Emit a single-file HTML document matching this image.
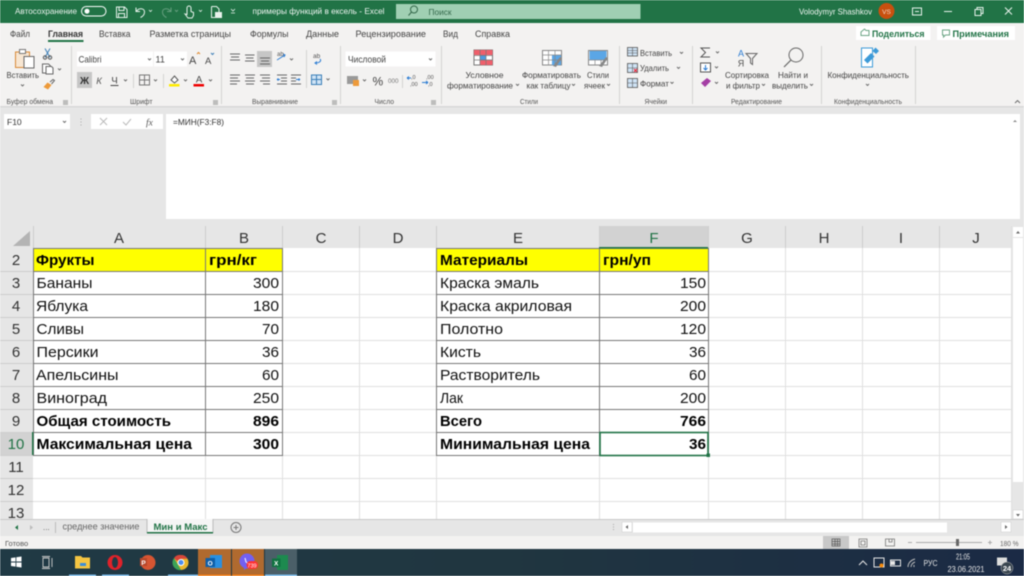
<!DOCTYPE html>
<html><head><meta charset="utf-8"><style>
html,body{margin:0;padding:0;width:1024px;height:576px;overflow:hidden;background:#fff}
svg{display:block;filter:blur(.45px)}
text{font-family:"Liberation Sans","Noto Sans CJK SC",sans-serif}
.r text{font-size:8.5px;fill:#444}
.g text{font-size:7.5px;fill:#555}
.c{font-size:15px;fill:#111}
.b{font-weight:bold;fill:#000}
.h{font-size:15px;fill:#333;text-anchor:middle}
.w{fill:#fff}
.ch{fill:none;stroke:#666;stroke-width:.9}
</style></head><body>
<svg width="1024" height="576" viewBox="0 0 1024 576" xmlns="http://www.w3.org/2000/svg">
<!-- title bar -->
<rect width="1024" height="23" fill="#217346"/>
<text x="15" y="14" class="w" font-size="8.5" textLength="62" lengthAdjust="spacingAndGlyphs" opacity=".9">Автосохранение</text>
<rect x="81.500" y="6.500" width="24.500" height="9.500" rx="4.700" fill="none" stroke="#fff"/>
<circle cx="87" cy="11.200" r="2.500" fill="#fff"/>
<g fill="none" stroke="#e8f2ec" stroke-width="1">
<path d="M116.500 7h8l2.500 2.500v8h-10.500zM119 7v3.500h5V7M118.500 17.500v-4h6v4"/>
<path d="M136 7.500v4h4M136.500 11.500c2-4 8-3.500 8 .5 0 2.500-2 4.500-4 5.500"/>
<path d="M149 10l1.500 1.500L152 10M199 10l1.500 1.500L202 10" stroke-width=".8"/>
<path d="M171 7.500v4h-4M170.500 11.500c-2-4-8-3.500-8 .5 0 2.500 2 4.500 4 5.500M175 10l1.500 1.500L178 10" opacity=".35"/>
<path d="M187 8a2 2 0 0 1 4 0v3.500l2.500 1v3l-1.500 2.500h-4l-3-4 2 .5z"/>
<path d="M211.500 6.500h5l2.500 2.500v3M211.500 6.500v11h4"/>
<path d="M231 9l2 2 2-2M231 13h4" stroke-width=".8"/>
</g>
<rect x="215" y="12" width="7" height="6" fill="#e8f2ec"/>
<text x="252.500" y="14" class="w" font-size="8.500" textLength="132" lengthAdjust="spacingAndGlyphs" opacity=".92">примеры функций в ексель  -  Excel</text>
<rect x="396" y="4" width="244.500" height="15" fill="#a0cfb3"/>
<circle cx="414" cy="9.500" r="3.500" fill="none" stroke="#35694c"/><path d="M411.500 12l-3 3.500" stroke="#35694c"/>
<text x="428.500" y="15" font-size="8.500" fill="#35694c" textLength="23" lengthAdjust="spacingAndGlyphs">Поиск</text>
<text x="799" y="14.500" class="w" font-size="8.500" textLength="73" lengthAdjust="spacingAndGlyphs" opacity=".92">Volodymyr Shashkov</text>
<circle cx="886.500" cy="11" r="8" fill="#c8500f"/>
<text x="886.500" y="14" font-size="6.500" fill="#f4d9c8" text-anchor="middle">VS</text>
<g fill="none" stroke="#e8f2ec">
<rect x="912.500" y="8" width="9" height="7"/><path d="M915 11.500h4"/>
<path d="M944 11.500h8"/>
<path d="M975 9.500h6v6h-6zM977 9.500V7.500h6v6h-2"/>
<path d="M1005 7.500l7 7M1012 7.500l-7 7"/>
</g>
<!-- ribbon -->
<rect y="23" width="1024" height="83" fill="#f3f2f1"/>
<g class="r">
<text x="10" y="37" style="font-size:9px" textLength="20" lengthAdjust="spacingAndGlyphs">Файл</text>
<text x="48" y="37" style="font-size:9px;font-weight:bold;fill:#333" textLength="35" lengthAdjust="spacingAndGlyphs">Главная</text>
<text x="99" y="37" style="font-size:9px" textLength="31.500" lengthAdjust="spacingAndGlyphs">Вставка</text>
<text x="149.500" y="37" style="font-size:9px" textLength="81.500" lengthAdjust="spacingAndGlyphs">Разметка страницы</text>
<text x="250" y="37" style="font-size:9px" textLength="38.500" lengthAdjust="spacingAndGlyphs">Формулы</text>
<text x="306" y="37" style="font-size:9px" textLength="33" lengthAdjust="spacingAndGlyphs">Данные</text>
<text x="355.500" y="37" style="font-size:9px" textLength="70.500" lengthAdjust="spacingAndGlyphs">Рецензирование</text>
<text x="443" y="37" style="font-size:9px" textLength="15" lengthAdjust="spacingAndGlyphs">Вид</text>
<text x="475" y="37" style="font-size:9px" textLength="35" lengthAdjust="spacingAndGlyphs">Справка</text>
</g>
<rect x="48" y="40" width="35.500" height="2" fill="#217346"/>
<rect x="856" y="26" width="74.500" height="14" fill="#fff"/>
<rect x="937" y="26" width="78" height="14" fill="#fff"/>
<path d="M861 35.500h8v-5h-3l-1.500-1.500-3.500 3z" fill="none" stroke="#6ba585"/>
<path d="M942.500 30h7v5h-4l-2 2v-2h-1z" fill="none" stroke="#6ba585"/>
<text x="872" y="37" font-size="9" font-weight="bold" fill="#217346" textLength="52.500" lengthAdjust="spacingAndGlyphs">Поделиться</text>
<text x="952.500" y="37" font-size="9" font-weight="bold" fill="#217346" textLength="56.500" lengthAdjust="spacingAndGlyphs">Примечания</text>
<!-- separators -->
<g stroke="#d4d3d2"><path d="M71.500 46v58M221.500 46v58M340.500 46v58M441.500 46v58M619.500 46v58M692.500 46v58M821.500 46v58M915.500 46v58M306.500 50v38"/></g>
<!-- boxes first so text sits above -->
<rect x="77" y="51.500" width="76" height="15" fill="#fff"/><rect x="154" y="51.500" width="33" height="15" fill="#fff"/>
<rect x="345.500" y="51.500" width="90" height="15" fill="#fff"/>
<!-- clipboard -->
<path d="M15.500 52h14v15.500h-14z" fill="#f7e6d2" stroke="#d98a38"/>
<rect x="19.500" y="49.500" width="6" height="4" fill="#fff" stroke="#777"/>
<rect x="24" y="56.500" width="10" height="11.500" fill="#fff" stroke="#666"/>
<g class="r">
<text x="6.500" y="78" textLength="32.500" lengthAdjust="spacingAndGlyphs">Вставить</text>
<text x="78.500" y="62.500" style="font-size:9px" textLength="23" lengthAdjust="spacingAndGlyphs">Calibri</text>
<text x="155.500" y="62.500" style="font-size:9px">11</text>
<text x="348" y="62.500" style="font-size:9px" textLength="38" lengthAdjust="spacingAndGlyphs">Числовой</text>
<text x="465.500" y="78" textLength="38" lengthAdjust="spacingAndGlyphs">Условное</text>
<text x="447" y="88.500" textLength="66" lengthAdjust="spacingAndGlyphs">форматирование</text>
<text x="522" y="78" textLength="59" lengthAdjust="spacingAndGlyphs">Форматировать</text>
<text x="526.500" y="88.500" textLength="44" lengthAdjust="spacingAndGlyphs">как таблицу</text>
<text x="587" y="78" textLength="22" lengthAdjust="spacingAndGlyphs">Стили</text>
<text x="584" y="88.500" textLength="21" lengthAdjust="spacingAndGlyphs">ячеек</text>
<text x="640" y="56" textLength="32" lengthAdjust="spacingAndGlyphs">Вставить</text>
<text x="640" y="71" textLength="29" lengthAdjust="spacingAndGlyphs">Удалить</text>
<text x="640" y="86.500" textLength="29" lengthAdjust="spacingAndGlyphs">Формат</text>
<text x="725" y="78" textLength="44" lengthAdjust="spacingAndGlyphs">Сортировка</text>
<text x="726" y="88.500" textLength="34" lengthAdjust="spacingAndGlyphs">и фильтр</text>
<text x="778" y="78" textLength="30" lengthAdjust="spacingAndGlyphs">Найти и</text>
<text x="772" y="88.500" textLength="36" lengthAdjust="spacingAndGlyphs">выделить</text>
<text x="827.500" y="78" textLength="81.500" lengthAdjust="spacingAndGlyphs">Конфиденциальность</text>
</g>
<g class="g">
<text x="6.500" y="104" textLength="46.500" lengthAdjust="spacingAndGlyphs">Буфер обмена</text>
<text x="130" y="104" textLength="22.500" lengthAdjust="spacingAndGlyphs">Шрифт</text>
<text x="252" y="104" textLength="46" lengthAdjust="spacingAndGlyphs">Выравнивание</text>
<text x="374.500" y="104" textLength="19.500" lengthAdjust="spacingAndGlyphs">Число</text>
<text x="520" y="104" textLength="18" lengthAdjust="spacingAndGlyphs">Стили</text>
<text x="644.500" y="104" textLength="22.500" lengthAdjust="spacingAndGlyphs">Ячейки</text>
<text x="731" y="104" textLength="51" lengthAdjust="spacingAndGlyphs">Редактирование</text>
<text x="834" y="104" textLength="68" lengthAdjust="spacingAndGlyphs">Конфиденциальность</text>
</g>
<!-- clipboard small -->
<path d="M45 48.500l5 9M50 48.500l-5 9" stroke="#3c7fb8" fill="none"/><circle cx="45" cy="57.500" r="1.700" fill="none" stroke="#555"/><circle cx="50" cy="57.500" r="1.700" fill="none" stroke="#555"/>
<path d="M42.500 64h6l2 2v7h-8z" fill="#fff" stroke="#666"/><path d="M46 66.500h5.500l1.500 1.500v6h-7z" fill="#fff" stroke="#666"/>
<path d="M43.500 87l4-4.500 4 2.500-3.500 4.500z" fill="#ed9a3a"/><path d="M50 82l3-2.500 1.500 1-3 3.500" fill="none" stroke="#666"/>
<path d="M58 68.500l1.500 1.500 1.500-1.500M21 84.500l1.500 1.500 1.500-1.500" class="ch"/>
<!-- font -->
<path d="M148 58.500l1.500 1.500 1.500-1.500M181 58.500l1.500 1.500 1.500-1.500" class="ch"/>
<text x="189" y="64" font-size="11" fill="#444">A</text><text x="205" y="64" font-size="9.500" fill="#444">A</text>
<path d="M197 54l1.500-1.500L200 54" fill="none" stroke="#e08a2e"/><path d="M211 53l1.500 1.500L214 53" fill="none" stroke="#3c7fb8"/>
<rect x="77" y="72" width="15" height="16" fill="#c6c6c6"/>
<text x="84.500" y="84" font-size="10" font-weight="bold" fill="#333" text-anchor="middle">Ж</text>
<text x="99" y="84" font-size="9.500" font-style="italic" fill="#555" text-anchor="middle">К</text>
<text x="114.500" y="83.500" font-size="9.500" fill="#444" text-anchor="middle">Ч</text><path d="M110.500 85.500h8" stroke="#444"/>
<path d="M124 79.500l1.500 1.500 1.500-1.500M154 79.500l1.500 1.500 1.500-1.500M184 79.500l1.500 1.500 1.500-1.500M209 79.500l1.500 1.500 1.500-1.500" class="ch"/>
<path d="M133.500 74v14" stroke="#d4d3d2"/><path d="M163.500 74v14" stroke="#d4d3d2"/>
<path d="M139.500 75h10v10h-10zM144.500 75v10M139.500 80h10" fill="none" stroke="#777"/>
<path d="M171 80l3.500-4 3.500 4-3.500 3z" fill="#fff" stroke="#555"/><rect x="169" y="84" width="10.500" height="2.500" fill="#ffeb00"/>
<text x="199" y="82.500" font-size="9.500" fill="#444" text-anchor="middle">A</text><rect x="193.500" y="84" width="10.500" height="2.500" fill="#e00"/>
<g fill="#888"><path d="M63 100h5v5h-5z" opacity=".5"/><path d="M213 100h5v5h-5z" opacity=".5"/><path d="M332 100h5v5h-5z" opacity=".5"/><path d="M431 100h5v5h-5z" opacity=".5"/></g>
<!-- alignment -->
<rect x="257" y="51" width="15" height="16" fill="#c6c6c6"/>
<g stroke="#666" fill="none"><path d="M230 54h10M231 57h8M230 60h10M245 55h9.500M246 58h7.500M245 61h9.500M260 58h10M261 61h8M260 64h10"/>
<path d="M230 75h10M230 78h8M230 81h10M230 84h7M245 75h10M246 78h8M245 81h10M246 84h8M260 75h10M262 78h8M260 81h10M263 84h7"/>
<path d="M277 75h10M281 78h6M281 81h6M277 84h10M291 75h10M291 78h5M291 81h5M291 84h10"/></g>
<path d="M277 79.500h3M277 79.500l1.500-1M277 79.500l1.500 1M296 79.500h3M300 79.500l-1.500-1M300 79.500l-1.500 1" stroke="#2b7cd3" fill="none"/>
<path d="M277 60l8-5M283 54l2 1-1 2" stroke="#2b7cd3" fill="none"/><text x="277" y="56" font-size="6" fill="#555">ab</text>
<path d="M290 58.500l1.500 1.500 1.500-1.500M326.500 78.500l1.500 1.500 1.500-1.500" class="ch"/>
<text x="313" y="58" font-size="6.500" fill="#555">ab</text><path d="M320 59c2 2-1 4-4 4M317 61.500l-2 1.500 2 1.500" stroke="#2b7cd3" fill="none"/>
<rect x="311.500" y="75" width="10" height="9.500" fill="#cfe3f5" stroke="#3c7fb8"/><path d="M311.500 79.500h10M316.500 75v10" stroke="#3c7fb8"/>
<!-- number -->
<path d="M429 58.500l1.500 1.500 1.500-1.500M363 79.500l1.500 1.500 1.500-1.500" class="ch"/>
<rect x="347" y="76" width="11" height="8" fill="#999"/><rect x="353" y="80" width="6" height="6" fill="#ed9a3a"/>
<text x="372.500" y="85.500" font-size="12" fill="#444">%</text>
<text x="388" y="83" font-size="6.500" fill="#777" textLength="10.500" lengthAdjust="spacingAndGlyphs">000</text>
<path d="M402.500 75v13" stroke="#d4d3d2"/>
<text x="411" y="79" font-size="5.500" fill="#555">,0</text><text x="410" y="86" font-size="5.500" fill="#555">,00</text>
<text x="426" y="79" font-size="5.500" fill="#555">,00</text><text x="428" y="86" font-size="5.500" fill="#555">,0</text>
<path d="M407 78h4M407 78l2-1.500M407 78l2 1.500M422 82.500h6M428 82.500l-2-1.500M428 82.500l-2 1.500" stroke="#2b7cd3" fill="none"/>
<!-- styles icons -->
<g>
<rect x="474" y="50" width="18.500" height="15" fill="#fff" stroke="#777"/>
<rect x="474" y="50" width="18.500" height="5" fill="#ef5f6b"/><rect x="480" y="60" width="12.500" height="5" fill="#ef5f6b"/><rect x="480" y="55" width="6" height="5" fill="#4c9be0"/>
<path d="M474.500 55.500h18M474.500 60h18M480 50v15M486 50v15" stroke="#777" fill="none" stroke-width=".7"/>
<rect x="542.500" y="50.500" width="19" height="14.500" fill="#fff" stroke="#888"/><rect x="552" y="55" width="9" height="10" fill="#5ba6e6"/>
<path d="M543 55h19M543 60h19M548.500 51v14M555 51v14" stroke="#888" stroke-width=".7"/><path d="M553 66l7-9 2 1-6 9z" fill="#888"/>
<rect x="588.500" y="50.500" width="19" height="14.500" fill="#fff" stroke="#888"/><rect x="589.500" y="51" width="17" height="9" fill="#5ba6e6"/>
<path d="M589 60h19M595 60v5M601 60v5" stroke="#888" stroke-width=".7"/><path d="M599 66l7-9 2 1-6 9z" fill="#888"/>
</g>
<path d="M516 84l1.500 1.500 1.500-1.500M572 84l1.500 1.500 1.500-1.500M607 84l1.500 1.500 1.500-1.500M680 52l1.500 1.500 1.500-1.500M677 67l1.500 1.500 1.500-1.500M670.500 82l1.500 1.500 1.500-1.500M716 51.500l1.500 1.500 1.500-1.500M715 66.500l1.500 1.500 1.500-1.500M715 82l1.500 1.500 1.500-1.500M762 84l1.500 1.500 1.500-1.500M810 84l1.500 1.500 1.500-1.500M866 84l1.500 1.500 1.500-1.500" class="ch"/>
<!-- cells -->
<g fill="#cfe3f5" stroke="#555" stroke-width=".8">
<rect x="627.500" y="47.500" width="10" height="8.500"/><rect x="627.500" y="63.500" width="10" height="9"/><rect x="627.500" y="78.500" width="10" height="9"/>
</g>
<path d="M627.500 50.500h10M627.500 53h10M632.500 47.500v8.500M627.500 68h10M632.500 63.500v9M627.500 83h10M632.500 78.500v9" stroke="#555" stroke-width=".6" fill="none"/>
<path d="M634 69l3 3M637 69l-3 3" stroke="#e23" fill="none"/>
<!-- editing -->
<path d="M710 48h-9l4.500 4.500-4.500 4.500h9" fill="none" stroke="#555"/>
<rect x="700.500" y="63" width="10" height="9" fill="#fff" stroke="#555"/><path d="M705.500 65v5M703.500 68l2 2 2-2" stroke="#2b7cd3" fill="none"/>
<path d="M701 83l6-5 4 3-6 6z" fill="#a43ea4"/>
<text x="741" y="56.500" font-size="9" fill="#2b7cd3" text-anchor="middle">А</text><text x="741" y="66.500" font-size="9" fill="#555" text-anchor="middle">Я</text>
<path d="M746 53.500h11l-4.500 5v6l-2-1.500v-4.500z" fill="none" stroke="#666"/>
<circle cx="796" cy="55" r="7" fill="none" stroke="#666"/><path d="M791 60l-7 7" stroke="#666" stroke-width="1.200"/>
<!-- privacy -->
<path d="M861.500 48h11v19h-11z" fill="#fff" stroke="#3c9ad8"/>
<path d="M864 60l7-7 3.500 3.500-7 7z" fill="#3c9ad8"/><path d="M872.500 51l3-3.500 3.500 3.500-3 3z" fill="#3c9ad8"/>
<path d="M1015 103l2.500-2.500 2.500 2.500" class="ch"/>
<!-- formula bar -->
<rect y="106" width="1024" height="120" fill="#e6e6e6"/>
<rect y="106" width="1024" height="1.500" fill="#d8d8d8"/>
<rect x="4" y="114" width="66" height="15" fill="#fff"/>
<text x="7" y="125" font-size="8.500" fill="#333">F10</text>
<path d="M63 121l1.500 1.500 1.500-1.500" class="ch"/>
<path d="M81 118.500v7" stroke="#aaa" stroke-dasharray="1 2"/>
<rect x="91" y="114" width="72" height="15" fill="#fff"/>
<path d="M100 118l7 7M107 118l-7 7M123 122l3 3 5-6" fill="none" stroke="#bbb"/>
<text x="146" y="125.500" font-size="9.500" font-style="italic" fill="#555" style="font-family:'Liberation Serif',serif">fx</text>
<rect x="166" y="114" width="854" height="105" fill="#fff"/>
<text x="173" y="125" font-size="8.500" fill="#333" textLength="51" lengthAdjust="spacingAndGlyphs">=МИН(F3:F8)</text>
<path d="M1013 122l2-2 2 2" fill="#888"/>
<!-- grid -->
<rect y="226" width="1012" height="293" fill="#fff"/>
<rect x="0" y="226" width="1012" height="22" fill="#e6e6e6"/>
<rect x="0" y="248" width="33" height="271" fill="#e6e6e6"/>
<rect x="599" y="226" width="109" height="22" fill="#d2d2d2"/>
<rect x="0" y="432" width="33" height="23" fill="#d2d2d2"/>
<path d="M30 231v15H13z" fill="#b4b4b4"/>
<g stroke="#e0e0e0">
<path d="M282.500 248v271M359.500 248v271M436.500 248v271M708.500 248v271M785.500 248v271M862.500 248v271M939.500 248v271M1011.500 226v293M205.500 455v64M599.500 455v64"/>
<path d="M33 271.500h979M33 294.500h979M33 317.500h979M33 340.500h979M33 363.500h979M33 386.500h979M33 409.500h979M33 432.500h979M33 455.500h979M33 478.500h979M33 501.500h979"/>
</g>
<g stroke="#cdcdcd">
<path d="M33.500 226v22M205.500 226v22M282.500 226v22M359.500 226v22M436.500 226v22M599.500 226v22M708.500 226v22M785.500 226v22M862.500 226v22M939.500 226v22"/>
<path d="M0 271.500h33M0 294.500h33M0 317.500h33M0 340.500h33M0 363.500h33M0 386.500h33M0 409.500h33M0 432.500h33M0 455.500h33M0 478.500h33M0 501.500h33"/>
</g>
<rect x="33" y="248" width="250" height="23" fill="#ff0"/>
<rect x="436" y="248" width="273" height="23" fill="#ff0"/>
<g stroke="#777" fill="none">
<path d="M33 248.500h250M33 271.500h250M33 294.500h250M33 317.500h250M33 340.500h250M33 363.500h250M33 386.500h250M33 409.500h250M33 432.500h250M33 455.500h250M33.500 248v208M205.500 248v208M282.500 248v208"/>
<path d="M436 248.500h273M436 271.500h273M436 294.500h273M436 317.500h273M436 340.500h273M436 363.500h273M436 386.500h273M436 409.500h273M436 432.500h273M436 455.500h273M436.500 248v208M599.500 248v208M708.500 248v208"/>
</g>
<rect x="599" y="247" width="109" height="1.500" fill="#217346"/>
<rect x="32" y="432" width="1.500" height="23" fill="#217346"/>
<rect x="600" y="432.500" width="108" height="23" fill="none" stroke="#217346" stroke-width="1.600"/>
<rect x="706.500" y="453.500" width="3.500" height="3.500" fill="#217346"/>
<!-- headers -->
<text x="119" y="243" class="h">A</text><text x="244" y="243" class="h">B</text><text x="321" y="243" class="h">C</text><text x="398" y="243" class="h">D</text><text x="518" y="243" class="h">E</text><text x="654" y="243" class="h" style="fill:#217346">F</text><text x="747" y="243" class="h">G</text><text x="824" y="243" class="h">H</text><text x="901" y="243" class="h">I</text><text x="976" y="243" class="h">J</text>
<text x="16" y="265" class="h">2</text><text x="16" y="288" class="h">3</text><text x="16" y="311" class="h">4</text><text x="16" y="334" class="h">5</text><text x="16" y="357" class="h">6</text><text x="16" y="380" class="h">7</text><text x="16" y="403" class="h">8</text><text x="16" y="426" class="h">9</text><text x="16" y="449" class="h" style="fill:#217346">10</text><text x="16" y="472" class="h">11</text><text x="16" y="495" class="h">12</text><text x="16" y="518" class="h">13</text>
<!-- table 1 -->
<text x="36" y="265" class="c b" textLength="58.500" lengthAdjust="spacingAndGlyphs">Фрукты</text>
<text x="209" y="265" class="c b" textLength="48" lengthAdjust="spacingAndGlyphs">грн/кг</text>
<text x="36.500" y="288" class="c" textLength="56" lengthAdjust="spacingAndGlyphs">Бананы</text>
<text x="36" y="311" class="c" textLength="52" lengthAdjust="spacingAndGlyphs">Яблука</text>
<text x="36.500" y="334" class="c" textLength="47.500" lengthAdjust="spacingAndGlyphs">Сливы</text>
<text x="36.500" y="357" class="c" textLength="62" lengthAdjust="spacingAndGlyphs">Персики</text>
<text x="36" y="380" class="c" textLength="82.500" lengthAdjust="spacingAndGlyphs">Апельсины</text>
<text x="36.500" y="403" class="c" textLength="70.500" lengthAdjust="spacingAndGlyphs">Виноград</text>
<text x="36.500" y="426" class="c b" textLength="134.500" lengthAdjust="spacingAndGlyphs">Общая стоимость</text>
<text x="36.500" y="449" class="c b" textLength="155.500" lengthAdjust="spacingAndGlyphs">Максимальная цена</text>
<text x="253" y="288" class="c" textLength="26" lengthAdjust="spacingAndGlyphs">300</text>
<text x="253" y="311" class="c" textLength="26" lengthAdjust="spacingAndGlyphs">180</text>
<text x="262" y="334" class="c" textLength="17" lengthAdjust="spacingAndGlyphs">70</text>
<text x="262" y="357" class="c" textLength="17" lengthAdjust="spacingAndGlyphs">36</text>
<text x="262" y="380" class="c" textLength="17" lengthAdjust="spacingAndGlyphs">60</text>
<text x="253" y="403" class="c" textLength="26" lengthAdjust="spacingAndGlyphs">250</text>
<text x="253" y="426" class="c b" textLength="26" lengthAdjust="spacingAndGlyphs">896</text>
<text x="253" y="449" class="c b" textLength="26" lengthAdjust="spacingAndGlyphs">300</text>
<!-- table 2 -->
<text x="440" y="265" class="c b" textLength="88" lengthAdjust="spacingAndGlyphs">Материалы</text>
<text x="603" y="265" class="c b" textLength="48" lengthAdjust="spacingAndGlyphs">грн/уп</text>
<text x="440" y="288" class="c" textLength="99" lengthAdjust="spacingAndGlyphs">Краска эмаль</text>
<text x="440" y="311" class="c" textLength="132" lengthAdjust="spacingAndGlyphs">Краска акриловая</text>
<text x="440" y="334" class="c" textLength="63" lengthAdjust="spacingAndGlyphs">Полотно</text>
<text x="440" y="357" class="c" textLength="41" lengthAdjust="spacingAndGlyphs">Кисть</text>
<text x="440" y="380" class="c" textLength="100" lengthAdjust="spacingAndGlyphs">Растворитель</text>
<text x="440" y="403" class="c" textLength="23" lengthAdjust="spacingAndGlyphs">Лак</text>
<text x="440" y="426" class="c b" textLength="42" lengthAdjust="spacingAndGlyphs">Всего</text>
<text x="440" y="449" class="c b" textLength="150" lengthAdjust="spacingAndGlyphs">Минимальная цена</text>
<text x="680" y="288" class="c" textLength="26" lengthAdjust="spacingAndGlyphs">150</text>
<text x="680" y="311" class="c" textLength="26" lengthAdjust="spacingAndGlyphs">200</text>
<text x="680" y="334" class="c" textLength="26" lengthAdjust="spacingAndGlyphs">120</text>
<text x="689" y="357" class="c" textLength="17" lengthAdjust="spacingAndGlyphs">36</text>
<text x="689" y="380" class="c" textLength="17" lengthAdjust="spacingAndGlyphs">60</text>
<text x="680" y="403" class="c" textLength="26" lengthAdjust="spacingAndGlyphs">200</text>
<text x="680" y="426" class="c b" textLength="26" lengthAdjust="spacingAndGlyphs">766</text>
<text x="689" y="449" class="c b" textLength="17" lengthAdjust="spacingAndGlyphs">36</text>
<!-- vertical scrollbar -->
<rect x="1012" y="226" width="12" height="293" fill="#e6e6e6"/>
<rect x="1013" y="227" width="10" height="10" fill="#fff"/>
<path d="M1016 233.500h4l-2-2.500z" fill="#666"/>
<rect x="1013" y="238" width="10" height="244" fill="#fff"/>
<rect x="1013" y="510" width="10" height="9" fill="#fff" stroke="#ccc" stroke-width=".5"/>
<path d="M1016 514h4l-2 2.500z" fill="#666"/>
<!-- sheet tabs -->
<rect y="519" width="1024" height="17" fill="#e6e6e6"/>
<path d="M0 519.500h1024" stroke="#c8c8c8"/>
<path d="M18 525v5l-3-2.500z" fill="#217346"/><path d="M30 525v5l3-2.500z" fill="#bbb"/>
<text x="43" y="530" font-size="8" fill="#666">...</text>
<path d="M55.500 522v11" stroke="#bbb"/>
<text x="62.500" y="529.500" font-size="9" fill="#666" textLength="77" lengthAdjust="spacingAndGlyphs">среднее значение</text>
<rect x="147" y="519" width="66" height="14" fill="#f5f5f5"/>
<path d="M147 519v14M213 519v14" stroke="#bbb"/>
<rect x="147" y="532" width="66" height="1.500" fill="#217346"/>
<text x="153.500" y="530" font-size="9" font-weight="bold" fill="#217346" textLength="54" lengthAdjust="spacingAndGlyphs">Мин и Макс</text>
<circle cx="236" cy="527.500" r="5" fill="none" stroke="#777"/><path d="M233.500 527.500h5M236 525v5" stroke="#777"/>
<path d="M613.500 524v7" stroke="#aaa" stroke-dasharray="1 1.500"/>
<rect x="622" y="522" width="10" height="10" fill="#fff" stroke="#ccc" stroke-width=".5"/><path d="M628 525v4l-2.500-2z" fill="#666"/>
<rect x="633" y="522.500" width="314" height="10" fill="#fff"/>
<rect x="1001" y="522" width="10" height="10" fill="#fff" stroke="#ccc" stroke-width=".5"/><path d="M1005 525v4l2.500-2z" fill="#666"/>
<!-- status bar -->
<rect y="536" width="1024" height="13" fill="#f3f2f1"/>
<text x="5" y="546" font-size="7.500" fill="#555">Готово</text>
<rect x="823" y="536" width="26" height="13" fill="#c8c8c8"/>
<path d="M832 539h8v7h-8zM832 541.500h8M832 544h8M835 539v7M837.500 539v7" fill="none" stroke="#555" stroke-width=".7"/>
<path d="M859 539h8v8h-8zM861 541h4v4h-4z" fill="none" stroke="#777" stroke-width=".8"/>
<path d="M885.500 539h9v7h-9zM889 539v3h3v-3" fill="none" stroke="#777" stroke-width=".8"/>
<path d="M908 542.500h4M916 542.500h66M988 542.500h4M990 540.500v4" stroke="#aaa"/>
<rect x="956" y="539" width="3" height="7" fill="#666"/>
<text x="1000" y="546" font-size="7" fill="#666" textLength="18.500" lengthAdjust="spacingAndGlyphs">180 %</text>
<!-- taskbar -->
<defs><linearGradient id="t" x1="0" x2="1" y1="0" y2="0"><stop offset="0" stop-color="#203a45"/><stop offset=".5" stop-color="#203640"/><stop offset="1" stop-color="#1b2a45"/></linearGradient></defs>
<rect y="549" width="1024" height="27" fill="url(#t)"/>
<path d="M11 558l4.500-.6v4.100H11zM16.300 557.300l5.200-.8v5H16.300zM11 562.500h4.500v4.100l-4.500-.6zM16.300 562.500h5.200v5l-5.200-.8z" fill="#fff"/>
<path d="M43 558h6v9h-6zM42 556.500h8M42 568.500h8M52 558v9" fill="none" stroke="#ccc" stroke-width=".9"/>
<rect x="198" y="549" width="33" height="27" fill="#b06a2f"/>
<rect x="232" y="549" width="32" height="27" fill="#b06a2f"/>
<rect x="265" y="549" width="32" height="27" fill="#4b5f68"/>
<g fill="#77b8e8"><rect x="69" y="574.500" width="27" height="1.500"/><rect x="102" y="574.500" width="27" height="1.500"/><rect x="168" y="574.500" width="30" height="1.500"/><rect x="265" y="574.500" width="32" height="1.500"/></g>
<rect x="198" y="574.500" width="33" height="1.500" fill="#f07a10"/><rect x="232" y="574.500" width="32" height="1.500" fill="#f07a10"/>
<path d="M75 556h6l1.500 1.500H90v11H75z" fill="#f5c542"/><rect x="80" y="563" width="6" height="3" fill="#3c8dd8"/>
<circle cx="115" cy="562.500" r="7.500" fill="#e0222a"/><ellipse cx="115" cy="562.500" rx="3" ry="5.500" fill="#203a45"/>
<circle cx="148" cy="562.500" r="7.500" fill="#d65532"/><rect x="140" y="558" width="7" height="8" fill="#b7472a"/><text x="143.500" y="565" font-size="6.500" font-weight="bold" fill="#fff" text-anchor="middle">P</text>
<circle cx="181" cy="562.500" r="7.500" fill="#e8b62c"/><path d="M181 555a7.500 7.500 0 0 1 6.500 3.700H181l-4 2.300-3-3A7.500 7.500 0 0 1 181 555z" fill="#d9453a"/><path d="M174 558l3.500 6 3.500 6a7.500 7.500 0 0 1-7-12z" fill="#3da357"/><circle cx="181" cy="562.500" r="3" fill="#4a8df0" stroke="#fff"/>
<rect x="210" y="555" width="12" height="13" fill="#2a8fe0"/><rect x="205.500" y="558" width="9.500" height="9" fill="#0f5fa8"/><text x="210.200" y="565.500" font-size="6.500" font-weight="bold" fill="#fff" text-anchor="middle">O</text>
<circle cx="247" cy="561" r="7.500" fill="#7360f2"/><path d="M244 566l0 4 4-3z" fill="#7360f2"/><path d="M245 558l1 4 3 2" stroke="#fff" fill="none"/>
<rect x="246.500" y="561" width="11.500" height="8" rx="4" fill="#f33"/><text x="252" y="567.500" font-size="5.500" fill="#fff" text-anchor="middle">739</text>
<rect x="277" y="555" width="11" height="15" fill="#1d8a4f"/><rect x="272" y="558.500" width="8.500" height="8.500" fill="#107341"/><text x="276.200" y="565.500" font-size="6.500" font-weight="bold" fill="#fff" text-anchor="middle">X</text>
<path d="M859 565l4-4 4 4" fill="none" stroke="#e6e6e6"/>
<rect x="874" y="558" width="10" height="9" fill="none" stroke="#e6e6e6"/><circle cx="881.500" cy="565.500" r="2" fill="#f58a0b"/>
<rect x="890.500" y="560" width="10" height="6" fill="none" stroke="#e6e6e6"/><rect x="891" y="561" width="4" height="4" fill="#e6e6e6"/>
<path d="M908 567c0-4 3-7 7-8M911 567c0-2 1.500-4 4-5M914 567v-2" fill="none" stroke="#bbb"/>
<text x="923.500" y="566" font-size="8" fill="#e6e6e6" textLength="14" lengthAdjust="spacingAndGlyphs">РУС</text>
<text x="956" y="559.500" font-size="8" fill="#e6e6e6" textLength="14" lengthAdjust="spacingAndGlyphs">21:05</text>
<text x="947.500" y="572" font-size="8" fill="#e6e6e6" textLength="37" lengthAdjust="spacingAndGlyphs">23.06.2021</text>
<rect x="997" y="557.500" width="10" height="8" fill="#ddd"/>
<circle cx="1007" cy="568" r="6" fill="#3a4650" stroke="#bbb" stroke-width=".5"/><text x="1007" y="571" font-size="7.500" font-weight="bold" fill="#fff" text-anchor="middle">24</text>
</svg>
</body></html>
